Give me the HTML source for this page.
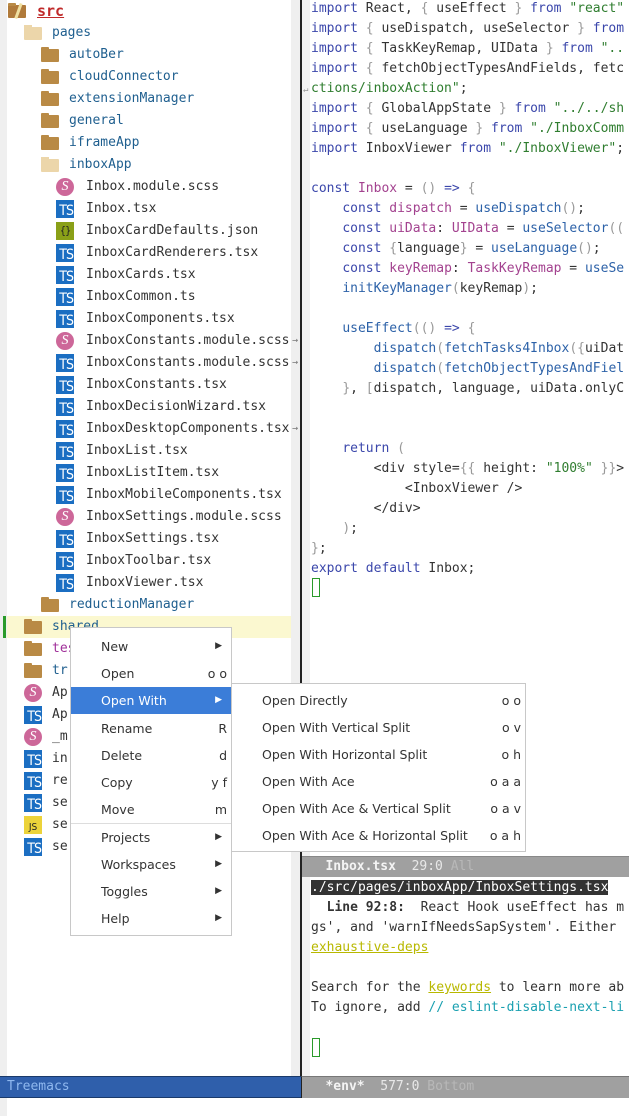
<!DOCTYPE html>
<html><head><meta charset="utf-8"><style>
*{margin:0;padding:0;box-sizing:border-box}
body{width:629px;height:1116px;overflow:hidden;background:#fff;position:relative;font-family:"DejaVu Sans Mono","Liberation Mono",monospace;font-size:13px;color:#333}
.abs{position:absolute}
.row{position:absolute;height:22px;line-height:22px;white-space:pre;color:#1f5f8f}
.fold{position:absolute;top:5px;width:18px;height:13px;background:#b98a45;border-radius:1px}
.fold:before{content:"";position:absolute;left:0;top:-2px;width:8px;height:3px;background:#b98a45;border-radius:1px 1px 0 0}
.ofold{position:absolute;top:5px;width:18px;height:13px;background:#ecd6aa;border-radius:1px}
.ofold:before{content:"";position:absolute;left:0;top:-2px;width:8px;height:3px;background:#ecd6aa}
.ts{position:absolute;top:2px;width:18px;height:18px;background:#1b6ec2;color:#fff;font:14px "DejaVu Sans Condensed","Liberation Sans",sans-serif;line-height:22px;text-align:right;padding-right:1px;letter-spacing:-1px}
.sc{position:absolute;top:2px;width:18px;height:18px;border-radius:50%;background:#cd6799;color:#fff;font:italic 14px "Liberation Serif",serif;line-height:18px;text-align:center}
.code{position:absolute;left:311px;white-space:pre;line-height:20px}
.k{color:#3b47ab}.s{color:#2f7d2f}.v{color:#a3428f}.f{color:#2d62a8}.p{color:#999}
.menu{position:absolute;background:#fff;border:1px solid #c8c8c8;font-family:"DejaVu Sans","Liberation Sans",sans-serif;font-size:12.5px;color:#333}
.mi{position:absolute;left:0;right:0;height:27px;line-height:27px;padding-left:30px}
.mi .sh{position:absolute;right:4px;top:0}
.mi .ar{position:absolute;right:9px;top:0;font-size:9px}
</style></head><body>
<div class="abs" style="left:0;top:0;width:7px;height:1116px;background:#efefef"></div>
<div class="abs" style="left:291px;top:0;width:9px;height:1077px;background:#efefef"></div>
<div class="abs" style="left:300px;top:0;width:2px;height:1077px;background:#222"></div>
<div class="abs" style="left:302px;top:0;width:8px;height:1077px;background:#f2f2f2"></div>
<div class="abs" style="left:7px;top:616px;width:284px;height:22px;background:#fbf8d0"></div>
<div class="abs" style="left:3px;top:616px;width:3px;height:22px;background:#2a9a2a"></div>

<div class="row" style="top:0;left:8px"><div class="fold" style="left:0;background:#b07a3a"></div><div class="abs" style="left:9px;top:3px;width:3px;height:16px;background:#f0e0a0;transform:rotate(20deg)"></div><span style="position:absolute;left:29px;color:#c02a2a;font-weight:bold;font-size:15px;text-decoration:underline">src</span></div>
<div class="row" style="top:22px;left:24px"><div class="ofold" style="left:0"></div><span style="position:absolute;left:28px">pages</span></div>
<div class="row" style="top:44px;left:41px"><div class="fold" style="left:0"></div><span style="position:absolute;left:28px">autoBer</span></div>
<div class="row" style="top:66px;left:41px"><div class="fold" style="left:0"></div><span style="position:absolute;left:28px">cloudConnector</span></div>
<div class="row" style="top:88px;left:41px"><div class="fold" style="left:0"></div><span style="position:absolute;left:28px">extensionManager</span></div>
<div class="row" style="top:110px;left:41px"><div class="fold" style="left:0"></div><span style="position:absolute;left:28px">general</span></div>
<div class="row" style="top:132px;left:41px"><div class="fold" style="left:0"></div><span style="position:absolute;left:28px">iframeApp</span></div>
<div class="row" style="top:154px;left:41px"><div class="ofold" style="left:0"></div><span style="position:absolute;left:28px">inboxApp</span></div>

<div style="position:absolute;left:56px;top:176px;color:#333">
<div class="row" style="top:0"><div class="sc">S</div><span style="position:absolute;left:30px;color:#333">Inbox.module.scss</span></div>
<div class="row" style="top:22px"><div class="ts">TS</div><span style="position:absolute;left:30px;color:#333">Inbox.tsx</span></div>
<div class="row" style="top:44px"><div class="ts" style="background:#8aa018;color:#222;text-align:center;font-size:11px;line-height:18px;padding:0">{}</div><span style="position:absolute;left:30px;color:#333">InboxCardDefaults.json</span></div>
<div class="row" style="top:66px"><div class="ts">TS</div><span style="position:absolute;left:30px;color:#333">InboxCardRenderers.tsx</span></div>
<div class="row" style="top:88px"><div class="ts">TS</div><span style="position:absolute;left:30px;color:#333">InboxCards.tsx</span></div>
<div class="row" style="top:110px"><div class="ts">TS</div><span style="position:absolute;left:30px;color:#333">InboxCommon.ts</span></div>
<div class="row" style="top:132px"><div class="ts">TS</div><span style="position:absolute;left:30px;color:#333">InboxComponents.tsx</span></div>
<div class="row" style="top:154px"><div class="sc">S</div><span style="position:absolute;left:30px;color:#333">InboxConstants.module.scss</span><span style="position:absolute;left:236px;color:#777;font-size:10px">→</span></div>
<div class="row" style="top:176px"><div class="ts">TS</div><span style="position:absolute;left:30px;color:#333">InboxConstants.module.scss</span><span style="position:absolute;left:236px;color:#777;font-size:10px">→</span></div>
<div class="row" style="top:198px"><div class="ts">TS</div><span style="position:absolute;left:30px;color:#333">InboxConstants.tsx</span></div>
<div class="row" style="top:220px"><div class="ts">TS</div><span style="position:absolute;left:30px;color:#333">InboxDecisionWizard.tsx</span></div>
<div class="row" style="top:242px"><div class="ts">TS</div><span style="position:absolute;left:30px;color:#333">InboxDesktopComponents.tsx</span><span style="position:absolute;left:236px;color:#777;font-size:10px">→</span></div>
<div class="row" style="top:264px"><div class="ts">TS</div><span style="position:absolute;left:30px;color:#333">InboxList.tsx</span></div>
<div class="row" style="top:286px"><div class="ts">TS</div><span style="position:absolute;left:30px;color:#333">InboxListItem.tsx</span></div>
<div class="row" style="top:308px"><div class="ts">TS</div><span style="position:absolute;left:30px;color:#333">InboxMobileComponents.tsx</span></div>
<div class="row" style="top:330px"><div class="sc">S</div><span style="position:absolute;left:30px;color:#333">InboxSettings.module.scss</span></div>
<div class="row" style="top:352px"><div class="ts">TS</div><span style="position:absolute;left:30px;color:#333">InboxSettings.tsx</span></div>
<div class="row" style="top:374px"><div class="ts">TS</div><span style="position:absolute;left:30px;color:#333">InboxToolbar.tsx</span></div>
<div class="row" style="top:396px"><div class="ts">TS</div><span style="position:absolute;left:30px;color:#333">InboxViewer.tsx</span></div>
</div>
<div class="row" style="top:594px;left:41px"><div class="fold" style="left:0"></div><span style="position:absolute;left:28px">reductionManager</span></div>

<div style="position:absolute;left:24px;top:616px">
<div class="row" style="top:0"><div class="fold"></div><span style="position:absolute;left:28px">shared</span></div>
<div class="row" style="top:22px"><div class="fold"></div><span style="position:absolute;left:28px;color:#a0309a">test</span></div>
<div class="row" style="top:44px"><div class="fold"></div><span style="position:absolute;left:28px">tr</span></div>
<div class="row" style="top:66px"><div class="sc">S</div><span style="position:absolute;left:28px;color:#333">Ap</span></div>
<div class="row" style="top:88px"><div class="ts">TS</div><span style="position:absolute;left:28px;color:#333">Ap</span></div>
<div class="row" style="top:110px"><div class="sc">S</div><span style="position:absolute;left:28px;color:#333">_m</span></div>
<div class="row" style="top:132px"><div class="ts">TS</div><span style="position:absolute;left:28px;color:#333">in</span></div>
<div class="row" style="top:154px"><div class="ts">TS</div><span style="position:absolute;left:28px;color:#333">re</span></div>
<div class="row" style="top:176px"><div class="ts">TS</div><span style="position:absolute;left:28px;color:#333">se</span></div>
<div class="row" style="top:198px"><div class="ts" style="background:#ecd33a;color:#222;font-size:10px;line-height:24px;text-align:center;padding:0;letter-spacing:0">JS</div><span style="position:absolute;left:28px;color:#333">se</span></div>
<div class="row" style="top:220px"><div class="ts">TS</div><span style="position:absolute;left:28px;color:#333">se</span></div>
</div>

<div class="code" style="top:-1px"><span class="k">import</span> React, <span class="p">{</span> useEffect <span class="p">}</span> <span class="k">from</span> <span class="s">"react"</span>
<span class="k">import</span> <span class="p">{</span> useDispatch, useSelector <span class="p">}</span> <span class="k">from</span>
<span class="k">import</span> <span class="p">{</span> TaskKeyRemap, UIData <span class="p">}</span> <span class="k">from</span> <span class="s">"..</span>
<span class="k">import</span> <span class="p">{</span> fetchObjectTypesAndFields, fetc
<span class="s">ctions/inboxAction"</span>;
<span class="k">import</span> <span class="p">{</span> GlobalAppState <span class="p">}</span> <span class="k">from</span> <span class="s">"../../sh</span>
<span class="k">import</span> <span class="p">{</span> useLanguage <span class="p">}</span> <span class="k">from</span> <span class="s">"./InboxComm</span>
<span class="k">import</span> InboxViewer <span class="k">from</span> <span class="s">"./InboxViewer"</span>;

<span class="k">const</span> <span class="v">Inbox</span> = <span class="p">()</span> <span class="k">=&gt;</span> <span class="p">{</span>
    <span class="k">const</span> <span class="v">dispatch</span> = <span class="f">useDispatch</span><span class="p">()</span>;
    <span class="k">const</span> <span class="v">uiData</span>: <span class="v">UIData</span> = <span class="f">useSelector</span><span class="p">((</span>
    <span class="k">const</span> <span class="p">{</span>language<span class="p">}</span> = <span class="f">useLanguage</span><span class="p">()</span>;
    <span class="k">const</span> <span class="v">keyRemap</span>: <span class="v">TaskKeyRemap</span> = <span class="f">useSe</span>
    <span class="f">initKeyManager</span><span class="p">(</span>keyRemap<span class="p">)</span>;

    <span class="f">useEffect</span><span class="p">(()</span> <span class="k">=&gt;</span> <span class="p">{</span>
        <span class="f">dispatch</span><span class="p">(</span><span class="f">fetchTasks4Inbox</span><span class="p">({</span>uiDat
        <span class="f">dispatch</span><span class="p">(</span><span class="f">fetchObjectTypesAndFiel</span>
    <span class="p">}</span>, <span class="p">[</span>dispatch, language, uiData.onlyC


    <span class="k">return</span> <span class="p">(</span>
        &lt;div style=<span class="p">{{</span> height: <span class="s">"100%"</span> <span class="p">}}</span>&gt;
            &lt;InboxViewer /&gt;
        &lt;/div&gt;
    <span class="p">)</span>;
<span class="p">}</span>;
<span class="k">export</span> <span class="k">default</span> Inbox;</div>
<div class="abs" style="left:303px;top:85px;font-size:9px;color:#999">↵</div>
<div class="abs" style="left:312px;top:578px;width:8px;height:19px;border:1px solid #2a9a2a"></div>

<div class="abs" style="left:302px;top:856px;width:327px;height:21px;background:#a0a0a0;border-top:1px solid #888;line-height:20px;white-space:pre;color:#f4f4f4"><span style="font-weight:bold">   Inbox.tsx</span>  <span style="color:#e8e8e8">29:0</span> <span style="color:#b8b8b8">All</span></div>
<div class="code" style="top:878px;left:311px"><span style="background:#333;color:#fff">./src/pages/inboxApp/InboxSettings.tsx</span>
  <b>Line 92:8:</b>  React Hook useEffect has m
gs', and 'warnIfNeedsSapSystem'. Either
<span style="color:#b8b800;text-decoration:underline">exhaustive-deps</span>

Search for the <span style="color:#b8b800;text-decoration:underline">keywords</span> to learn more ab
To ignore, add <span style="color:#1aa0b0">// eslint-disable-next-li</span></div>
<div class="abs" style="left:312px;top:1038px;width:8px;height:19px;border:1px solid #2a9a2a"></div>

<div class="abs" style="left:0;top:1076px;width:301px;height:22px;background:#2f5fab;border-top:1px solid #1a3a6a;border-bottom:1px solid #1a3a6a;color:#8fb8ef;line-height:20px;padding-left:7px">Treemacs</div>
<div class="abs" style="left:301px;top:1076px;width:328px;height:22px;background:#a0a0a0;border-top:1px solid #777;border-left:1px solid #222;line-height:20px;white-space:pre;color:#f4f4f4"><span style="font-weight:bold">   *env*</span>  <span style="color:#e8e8e8">577:0</span> <span style="color:#b8b8b8">Bottom</span></div>

<div class="menu" style="left:70px;top:627px;width:162px;height:309px">
<div class="mi" style="top:5px">New<span class="ar">▶</span></div>
<div class="mi" style="top:32px">Open<span class="sh">o o</span></div>
<div class="mi" style="top:59px;background:#3b7dd8;color:#fff">Open With<span class="ar">▶</span></div>
<div class="mi" style="top:87px">Rename<span class="sh">R</span></div>
<div class="mi" style="top:114px">Delete<span class="sh">d</span></div>
<div class="mi" style="top:141px">Copy<span class="sh">y f</span></div>
<div class="mi" style="top:168px">Move<span class="sh">m</span></div>
<div class="abs" style="left:0;right:0;top:195px;height:1px;background:#ddd"></div>
<div class="mi" style="top:196px">Projects<span class="ar">▶</span></div>
<div class="mi" style="top:223px">Workspaces<span class="ar">▶</span></div>
<div class="mi" style="top:250px">Toggles<span class="ar">▶</span></div>
<div class="mi" style="top:277px">Help<span class="ar">▶</span></div>
</div>
<div class="menu" style="left:231px;top:683px;width:295px;height:169px">
<div class="mi" style="top:3px">Open Directly<span class="sh">o o</span></div>
<div class="mi" style="top:30px">Open With Vertical Split<span class="sh">o v</span></div>
<div class="mi" style="top:57px">Open With Horizontal Split<span class="sh">o h</span></div>
<div class="mi" style="top:84px">Open With Ace<span class="sh">o a a</span></div>
<div class="mi" style="top:111px">Open With Ace &amp; Vertical Split<span class="sh">o a v</span></div>
<div class="mi" style="top:138px">Open With Ace &amp; Horizontal Split<span class="sh">o a h</span></div>
</div>
</body></html>
